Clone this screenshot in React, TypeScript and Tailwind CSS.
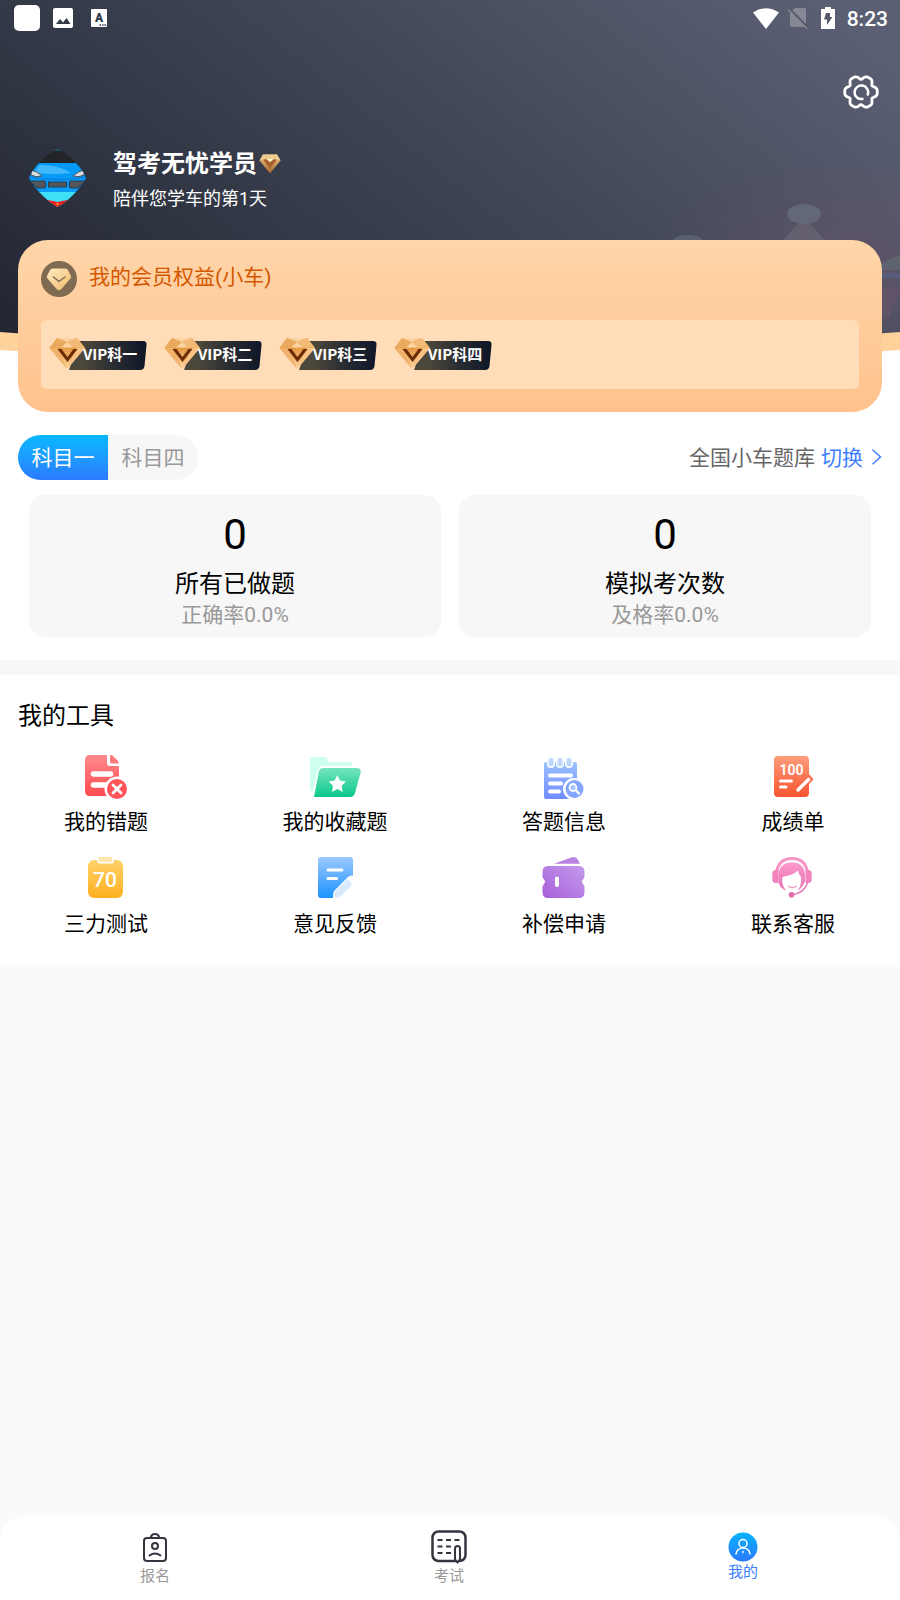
import { useState } from "react";
import type { ReactNode } from "react";

// six-lobed outline of the settings gear, the second term flattens the lobes
const gearPath =
  Array.from({ length: 96 }, (_, i) => {
    const a = (i / 96) * Math.PI * 2;
    const r = 15 + 1.8 * Math.cos(6 * a) - 0.5 * Math.cos(12 * a);
    return `${i === 0 ? "M" : "L"}${(18 + r * Math.cos(a)).toFixed(2)} ${(18 + r * Math.sin(a)).toFixed(2)}`;
  }).join("") + "Z";

const HeaderBackdrop = () => (
  <svg className="absolute top-0 left-0 w-full h-[352px]" viewBox="0 0 900 352" preserveAspectRatio="none" aria-hidden="true">
    <defs>
      <linearGradient id="sky" gradientUnits="userSpaceOnUse" x1="150" y1="430" x2="620" y2="-160">
        <stop offset="0" stopColor="#232732" />
        <stop offset="0.5" stopColor="#3d4353" />
        <stop offset="1" stopColor="#5b5f74" />
      </linearGradient>
      <radialGradient id="dusk" cx="0.5" cy="0.5" r="0.5">
        <stop offset="0" stopColor="#7a5568" stopOpacity="0.35" />
        <stop offset="1" stopColor="#7a5568" stopOpacity="0" />
      </radialGradient>
      <linearGradient id="tower" x1="0" y1="0" x2="1" y2="0">
        <stop offset="0" stopColor="#5f6877" />
        <stop offset="0.5" stopColor="#6b6170" />
        <stop offset="1" stopColor="#5f6877" />
      </linearGradient>
      <clipPath id="hill">
        <path d="M0 0H900V332Q450 368 0 332Z" />
      </clipPath>
    </defs>
    <path d="M0 300H900V350Q450 380 0 350Z" fill="#ffd29b" />
    <g clipPath="url(#hill)">
      <rect width="900" height="352" fill="url(#sky)" />
      <ellipse cx="850" cy="265" rx="210" ry="110" fill="url(#dusk)" />
      <path d="M804 217L780 244H828Z" fill="url(#tower)" opacity="0.8" />
      <ellipse cx="804" cy="214" rx="17" ry="10" fill="#626878" />
      <ellipse cx="688" cy="241" rx="15" ry="6" fill="#596070" />
      <path d="M880 264L900 255V270H880Z" fill="#5f636f" />
      <rect x="880" y="273" width="20" height="5" fill="#56618a" opacity="0.6" />
      <path d="M882 288H900L890 317Q884 321 880 319Z" fill="#66566a" opacity="0.7" />
    </g>
  </svg>
);

const StatusBar = () => (
  <div className="relative h-9 pl-[14px] pr-3 flex items-center justify-between text-white">
    <div className="flex items-center">
      <div className="size-[26px] rounded-[5px] bg-white"></div>
      <svg className="ml-[13px] size-5" viewBox="0 0 20 20">
        <rect width="20" height="20" rx="2" fill="#fff" />
        <path d="M3 16L7 11L10 14.500L13.500 10L17.500 16Z" fill="#333947" />
      </svg>
      <svg className="ml-[18px] w-4 h-[18px]" viewBox="0 0 16 18">
        <rect width="16" height="18" rx="1" fill="#fff" />
        <text x="8" y="13" textAnchor="middle" fontFamily="Roboto" fontWeight="900" fontSize="12" fill="#333947">A</text>
        <path d="M8.500 16H15" stroke="#333947" strokeWidth="1.500" strokeDasharray="1.500 1" />
      </svg>
    </div>
    <div className="flex items-center">
      <svg className="w-[26px] h-[21px]" viewBox="0 0 26 21">
        <path d="M0 4.500Q13 -4 26 4.500L13 21Z" fill="#fff" />
      </svg>
      <svg className="ml-[9px] w-5 h-[22px]" viewBox="0 0 20 22">
        <path d="M7 1H16Q18 1 18 3V20H4Q2 20 2 18V6Z" fill="#868995" />
        <path d="M1 1.500L20 20.500" stroke="#525666" strokeWidth="2" />
        <path d="M0 2.500L19 21.500" stroke="#868995" strokeWidth="1.500" />
      </svg>
      <svg className="ml-[13px] w-[14px] h-[22px]" viewBox="0 0 14 22">
        <path d="M4 0H10V2H14V22H0V2H4Z" fill="#fff" />
        <path d="M5 6H9V10H11.500L6 18V12.500H3Z" fill="#55596b" />
      </svg>
      <span className="ml-3 pt-0.5 text-[21px] leading-9 font-medium">8:23</span>
    </div>
  </div>
);

const Avatar = () => (
  <svg className="size-[58px] shrink-0" viewBox="0 0 58 58">
    <defs>
      <clipPath id="avatarClip">
        <path d="M28.500 0Q38 4 46 13Q54 21 57 29Q53 37 44 46Q36 54 28.500 58Q21 54 13 46Q4 37 0 29Q3 21 11 13Q19 4 28.500 0Z" />
      </clipPath>
      <linearGradient id="paint" x1="0" y1="0" x2="0" y2="1">
        <stop offset="0" stopColor="#0099f5" />
        <stop offset="1" stopColor="#0a9df8" />
      </linearGradient>
    </defs>
    <g clipPath="url(#avatarClip)">
      <rect width="58" height="58" fill="#232427" />
      <rect x="25" y="0" width="7" height="2" fill="#0b6470" />
      <rect y="14" width="58" height="30" fill="url(#paint)" />
      <path d="M10 16Q28 15 42 24Q24 26 5 24Z" fill="#5cc3ff" opacity="0.7" />
      <path d="M0 28Q28 33 58 28" stroke="#0678d4" strokeWidth="1" fill="none" />
      <path d="M2 21Q8 22 13 27Q7 29 2 26Z" fill="#d9dde0" stroke="#44505c" />
      <path d="M55 21Q49 22 44 27Q50 29 55 26Z" fill="#d9dde0" stroke="#44505c" />
      <path d="M1 32H16Q18 36 16 39H8Z" fill="#545658" stroke="#21405f" />
      <path d="M56 32H41Q39 36 41 39H49Z" fill="#545658" stroke="#21405f" />
      <rect x="19.500" y="33" width="18" height="5" fill="#545658" stroke="#21405f" />
      <rect y="43" width="58" height="15" fill="#40e0f8" />
      <path d="M14 50L28.500 53L43 50V58H14Z" fill="#f21b1b" />
      <path d="M27 54H30L28.500 57Z" fill="#e9a13c" />
    </g>
  </svg>
);

const NameGem = () => (
  <svg className="w-[22px] h-5" viewBox="0 0 22 20">
    <defs>
      <linearGradient id="nameGem" x1="0" y1="0" x2="0" y2="1">
        <stop offset="0" stopColor="#f0cf92" />
        <stop offset="0.500" stopColor="#cd9857" />
        <stop offset="1" stopColor="#a0632f" />
      </linearGradient>
    </defs>
    <path d="M4 0.500H18L21.500 6.500L11 19.500L0.500 6.500Z" fill="url(#nameGem)" />
    <path d="M0.500 6.500L4 0.500H18L21.500 6.500L17 5H5Z" fill="#ebcb90" />
    <path d="M4.500 6L7 5L11 8.500L15 5L17.500 6L11 14.500Z" fill="#a65f2c" />
    <path d="M7.500 5H14.500L11 8Z" fill="#fff4d6" />
  </svg>
);

const MemberGem = () => (
  <svg className="size-9" viewBox="0 0 36 36">
    <defs>
      <linearGradient id="memberGem" x1="0" y1="0" x2="1" y2="1">
        <stop offset="0" stopColor="#ffedc6" />
        <stop offset="1" stopColor="#f0b968" />
      </linearGradient>
    </defs>
    <circle cx="18" cy="18" r="18" fill="#7f6a52" />
    <path d="M11.500 7.500H24.500Q26 7.500 27 9L30 15Q30.500 16.500 29.500 17.500L20 28.500Q18 30 16 28.500L6.500 17.500Q5.500 16.500 6 15L9 9Q10 7.500 11.500 7.500Z" fill="url(#memberGem)" />
    <path d="M12.500 16L18 20.500L24 16" fill="none" stroke="#7f6a52" strokeWidth="1.500" strokeLinecap="round" strokeLinejoin="round" />
  </svg>
);

const VipPlate = ({ id }: { id: string }) => (
  <svg className="absolute inset-0 size-full" viewBox="0 0 98 33" aria-hidden="true">
    <defs>
      <linearGradient id={`${id}-plate`}>
        <stop offset="0.200" stopColor="#4c473b" />
        <stop offset="0.550" stopColor="#2b2e32" />
        <stop offset="1" stopColor="#0e1628" />
      </linearGradient>
      <linearGradient id={`${id}-gem`} x1="0" y1="0" x2="0" y2="1">
        <stop offset="0" stopColor="#f1b165" />
        <stop offset="0.350" stopColor="#e59a45" />
        <stop offset="1" stopColor="#ffd9a4" />
      </linearGradient>
    </defs>
    <path d="M30 4H94Q98 4 97.500 8L95.500 29Q95 33 91 33H20Z" fill={`url(#${id}-plate)`} />
    <path d="M8 1H28L36 11L18 32L0.500 11Z" fill={`url(#${id}-gem)`} />
    <path d="M8 1L18 5L12 10.500L0.500 11Z" fill="#eaa95c" />
    <path d="M8 1H28L18 5Z" fill="#f8d3a0" />
    <path d="M28 1L36 11L24 10.500L18 5Z" fill="#f1ba77" />
    <path d="M18 5L24 10.500H12Z" fill="#fbd5a1" />
    <path d="M0.500 11H9L18 32Z" fill="#f0b26b" />
    <path d="M36 11H28L18 32Z" fill="#f9c384" />
    <path d="M8.500 12H12.500L18.500 20L24.500 12H28.500L18.500 25Z" fill="#6d2c05" />
  </svg>
);

const ToolIcon = ({ children }: { children: ReactNode }) => (
  <svg className="w-[54px] h-12" viewBox="0 0 54 48" aria-hidden="true">
    {children}
  </svg>
);

const Gradient = ({ id, from, to, tilt }: { id: string; from: string; to: string; tilt?: boolean }) => (
  <defs>
    <linearGradient id={id} x1={tilt ? 1 : 0} y1="0" x2="0" y2="1">
      <stop offset="0" stopColor={from} />
      <stop offset="1" stopColor={to} />
    </linearGradient>
  </defs>
);

const WrongIcon = () => (
  <ToolIcon>
    <Gradient id="wrong" from="#ff8b8c" to="#ff4b4f" />
    <path d="M11 2H28V10Q28 13 31 13H40V43H11Q6 43 6 38V7Q6 2 11 2Z" fill="url(#wrong)" />
    <path d="M31 2Q33 2 34 3L39 8Q40 9 39.500 10.500H33Q31 10.500 31 8.500Z" fill="#ff7a7c" />
    <path d="M14.500 21H31.500M14.500 32H28" stroke="#fff" strokeWidth="5.500" strokeLinecap="round" />
    <circle cx="38" cy="36" r="12.500" fill="#fff" />
    <circle cx="38" cy="36" r="10" fill="#ff5558" />
    <path d="M34 32L42 40M42 32L34 40" stroke="#fff" strokeWidth="2.800" strokeLinecap="round" />
  </ToolIcon>
);

const FavoriteIcon = () => (
  <ToolIcon>
    <Gradient id="fav" from="#75e4c0" to="#09c88b" />
    <path d="M6 4H16Q19 4 20 7Q20.500 9 23 9H41Q45 9 45 13H15Q11 13 10 17L4.500 39Q2 38 2 35V8Q2 4 6 4Z" fill="#cffff1" />
    <path d="M15 15H48Q54 15 52.500 20L47 40Q46 44 42 44H6L11 18Q12 15 15 15Z" fill="url(#fav)" />
    <path d="M29.300 22L32 27.500L38 28.500L33.700 32.800L34.700 39L29.300 36L24 39L25 32.800L20.700 28.500L26.700 27.500Z" fill="#fff" />
  </ToolIcon>
);

const AnswerIcon = () => (
  <ToolIcon>
    <Gradient id="answer" from="#9bc2ff" to="#6f8cff" />
    <path d="M9 9H38Q40 9 40 11V46H9Q7 46 7 44V11Q7 9 9 9Z" fill="url(#answer)" />
    {[14, 23, 32].map((x) => (
      <g key={x}>
        <rect x={x - 4} y="3" width="8" height="12" rx="4" fill="#fff" />
        <rect x={x - 2.5} y="5" width="5" height="8.500" rx="2.500" fill="#bcd6ff" />
      </g>
    ))}
    <path d="M13 22.500H34M13 30.500H24M13 38.500H22" stroke="#fff" strokeWidth="4" strokeLinecap="round" />
    <circle cx="37" cy="36" r="11" fill="#fff" />
    <circle cx="37.500" cy="36" r="9" fill="#84a6ff" />
    <circle cx="36" cy="34.500" r="3.500" fill="#a9c4ff" stroke="#fff" strokeWidth="1.800" />
    <path d="M39 37.500L42 40.500" stroke="#fff" strokeWidth="2.400" strokeLinecap="round" />
  </ToolIcon>
);

const ScoreIcon = () => (
  <ToolIcon>
    <Gradient id="score" from="#ff9d7b" to="#f7542f" />
    <path d="M12 3H39Q43 3 43 7V21L47 25.500Q47.500 26 47 27L43 31V40Q43 44 39 44H12Q8 44 8 40V7Q8 3 12 3Z" fill="url(#score)" />
    <text x="25.500" y="22" textAnchor="middle" fontFamily="Roboto" fontWeight="600" fontSize="14" fill="#fff">100</text>
    <path d="M14.500 28H25.500M14.500 34H20" stroke="#fff" strokeWidth="3" strokeLinecap="round" />
    <path d="M32 37L42.500 26.500" stroke="#fff" strokeWidth="3.500" strokeLinecap="round" />
  </ToolIcon>
);

const TestIcon = () => (
  <ToolIcon>
    <Gradient id="test" from="#ffd269" to="#ffb01f" />
    <rect x="9" y="5" width="35" height="38" rx="6" fill="url(#test)" />
    <rect x="18" y="0" width="17" height="8.500" rx="3" fill="#fff" />
    <rect x="19.500" y="2" width="14" height="5" rx="1.500" fill="#ffe6ae" />
    <text x="26" y="32" textAnchor="middle" fontFamily="Roboto" fontWeight="500" fontSize="21" fill="#fff">70</text>
  </ToolIcon>
);

const FeedbackIcon = () => (
  <ToolIcon>
    <Gradient id="feedback" from="#9cc7ff" to="#1c93ff" />
    <path d="M13 2H42Q45 2 45 5V20.500Q42 20 40 22L27 35Q25 37 25 40V43H13Q10 43 10 40V5Q10 2 13 2Z" fill="url(#feedback)" />
    <path d="M39 25Q40 24 41 25L43.500 28Q44.500 29.500 43 31L33 41Q31.500 42.500 29 42.500H26.500V40Q26.500 37 28 35.500Z" fill="#d9eaff" />
    <path d="M20 15H34M20 23.500H28.500" stroke="#fff" strokeWidth="3" strokeLinecap="round" />
  </ToolIcon>
);

const TicketIcon = () => (
  <ToolIcon>
    <Gradient id="ticket" from="#c69bee" to="#a65fd8" tilt />
    <path d="M17 8.800L35 2.300Q39 1 41 5L43 8.800Z" fill="#b983e4" />
    <path d="M11 11H42Q47.500 11 47.500 17V21Q47.500 23 46 24.500Q44 26.700 46 29Q47.500 30.500 47.500 32V37Q47.500 43 42 43H11Q5.500 43 5.500 37V32Q5.500 30.500 7 29Q9 26.700 7 24.500Q5.500 23 5.500 21V17Q5.500 11 11 11Z" fill="url(#ticket)" />
    <path d="M20 23.500V30" stroke="#fff" strokeWidth="4" strokeLinecap="round" />
  </ToolIcon>
);

const ServiceIcon = () => (
  <ToolIcon>
    <Gradient id="service" from="#fb9bcb" to="#e86db0" />
    <path d="M10.500 17Q13 3.500 26 3.500Q39 3.500 41.500 17" fill="none" stroke="#f893c5" strokeWidth="3" />
    <path d="M26 7.500Q39 7.500 39 21V26Q37 32 32 35.500Q36 29 35 22Q33 20 32 15.500Q27 20 16.500 22Q15 30 20.500 36Q12.500 32 12.500 26V21Q12.500 7.500 26 7.500Z" fill="url(#service)" />
    <path d="M10 15H12.500V28H10Q6.300 28 6.300 24.500V18.500Q6.300 15 10 15ZM42 15H39.500V28H42Q45.700 28 45.700 24.500V18.500Q45.700 15 42 15Z" fill="#f283bd" />
    <path d="M22 31Q26 34 31 31Q26 35 22 31Z" fill="#e86db0" stroke="#e86db0" strokeWidth="0.500" />
    <path d="M42 27Q38 38.500 26 39.700" fill="none" stroke="#ea76b4" strokeWidth="1.500" />
    <circle cx="25.500" cy="39.700" r="2.800" fill="#e569ad" />
  </ToolIcon>
);

const vips = [
  { id: "vip1", label: "VIP科一" },
  { id: "vip2", label: "VIP科二" },
  { id: "vip3", label: "VIP科三" },
  { id: "vip4", label: "VIP科四" },
];

const subjects = ["科目一", "科目四"];

const stats = [
  { value: "0", title: "所有已做题", rate: "正确率0.0%" },
  { value: "0", title: "模拟考次数", rate: "及格率0.0%" },
];

const tools = [
  { label: "我的错题", icon: <WrongIcon /> },
  { label: "我的收藏题", icon: <FavoriteIcon /> },
  { label: "答题信息", icon: <AnswerIcon /> },
  { label: "成绩单", icon: <ScoreIcon /> },
  { label: "三力测试", icon: <TestIcon /> },
  { label: "意见反馈", icon: <FeedbackIcon /> },
  { label: "补偿申请", icon: <TicketIcon /> },
  { label: "联系客服", icon: <ServiceIcon /> },
];

const BottomNav = () => (
  <nav className="mt-auto h-[84px] pl-2 pr-2.5 rounded-t-3xl bg-white grid grid-cols-3 text-[15px] leading-5 text-[#999999]">
    <a href="#signup" className="pt-[14px] flex flex-col items-center">
      <svg className="w-9 h-9" viewBox="0 0 36 36" fill="none" stroke="#35343f" strokeWidth="2" strokeLinecap="round">
        <rect x="7" y="8" width="22" height="23" rx="3" />
        <path d="M14 7Q14.500 4 18 4Q21.500 4 22 7" />
        <circle cx="18" cy="16" r="3" />
        <path d="M12.500 25.500Q18 21.500 23.500 25.500" />
      </svg>
      <span>报名</span>
    </a>
    <a href="#exam" className="pt-[14px] flex flex-col items-center">
      <svg className="w-9 h-9" viewBox="0 0 36 36" fill="none" stroke="#35343f" strokeWidth="2">
        <rect x="1.500" y="1.500" width="33" height="29.500" rx="6" strokeWidth="2.500" />
        <path d="M6.500 10H11.500M15 10H20M23.500 10H28.500M6.500 16.500H11.500M15 16.500H20M6.500 23H11.500M15 23H20" />
        <path d="M24 29.500V18.500Q24 16 26.500 16Q29 16 29 18.500V29.500L26.500 32.500Z" fill="#fff" />
      </svg>
      <span>考试</span>
    </a>
    <a href="#mine" aria-current="page" className="pt-4 flex flex-col items-center text-[#3d7eff]">
      <svg className="size-[30px]" viewBox="0 0 30 30" fill="none" stroke="#fff" strokeWidth="1.500" strokeLinecap="round">
        <Gradient id="mine" from="#09b4ff" to="#2a78fd" />
        <circle cx="15" cy="15" r="14.500" fill="url(#mine)" stroke="none" />
        <circle cx="15" cy="11.500" r="4" />
        <path d="M8 22Q9 16 15 16Q21 16 22 22M15 19.500V20.500" />
      </svg>
      <span>我的</span>
    </a>
  </nav>
);

const App = () => {
  const [subject, setSubject] = useState(0);

  return (
    <div className="min-h-screen flex flex-col bg-[#fafafa] text-black font-['Roboto','Noto_Sans_CJK_SC',sans-serif]">
      <main className="bg-white">
        <header className="relative">
          <HeaderBackdrop />
          <StatusBar />
          <div className="relative pt-[38px] pr-[21px] flex justify-end">
            <button type="button" aria-label="设置">
              <svg className="size-9" viewBox="0 0 36 36" fill="none" stroke="#fff" strokeLinecap="round" strokeLinejoin="round">
                <path d={gearPath} strokeWidth="2.800" />
                <path d="M24.800 20.500A6.800 6.800 0 1 0 19.500 25" strokeWidth="2.500" />
              </svg>
            </button>
          </div>
          <div className="relative mt-[39px] pl-[29px] flex gap-[26px] text-white">
            <Avatar />
            <div>
              <h1 className="flex items-center gap-0.5 text-2xl leading-[30px] font-bold">
                驾考无忧学员
                <NameGem />
              </h1>
              <p className="mt-1 text-lg leading-8">陪伴您学车的第1天</p>
            </div>
          </div>

          <section className="relative mt-[25px] mx-[18px] px-[23px] pt-[21px] pb-[23px] rounded-[30px] bg-linear-to-b from-[#ffd6a9] to-[#ffc28e]">
            <div className="flex items-start gap-3">
              <MemberGem />
              <h2 className="text-[21px] leading-8 text-[#d45800]">我的会员权益(小车)</h2>
            </div>
            <div className="mt-[23px] h-[69px] pl-2 pb-0.5 flex items-center gap-[17px] rounded-md bg-[#ffddb8]">
              {vips.map((vip) => (
                <button key={vip.id} type="button" className="relative w-[98px] h-[33px] pl-[34px] text-left">
                  <VipPlate id={vip.id} />
                  <span className="relative text-[15px] leading-8 font-bold text-white whitespace-nowrap font-['Noto_Sans_CJK_SC',sans-serif]">{vip.label}</span>
                </button>
              ))}
            </div>
          </section>
        </header>

        <div className="mt-[23px] px-[18px] flex items-center justify-between text-[21px]">
          <div className="flex rounded-full overflow-hidden bg-[#f7f7f7]">
            {subjects.map((name, i) => (
              <button
                key={name}
                type="button"
                onClick={() => setSubject(i)}
                className={`w-[90px] h-[45px] pt-[3px] ${subject === i ? "bg-linear-to-b from-[#06b8ff] to-[#2b7bff] text-white" : "text-[#999999]"}`}
              >
                {name}
              </button>
            ))}
          </div>
          <a href="#switch" className="pt-[3px] flex items-center text-[#3d7eff]">
            <span className="mr-1.5 text-[#666666]">全国小车题库</span>
            切换
            <svg className="ml-2 mb-1 w-[11px] h-4" viewBox="0 0 11 16" fill="none" stroke="#3d7eff" strokeWidth="1.500">
              <path d="M1.500 0.800L9.500 8L1.500 15.200" />
            </svg>
          </a>
        </div>

        <div className="mt-[15px] px-[29px] pb-[23px] grid grid-cols-2 gap-[18px] text-center">
          {stats.map((stat) => (
            <div key={stat.title} className="pt-4 pb-1.5 rounded-2xl bg-[#f7f7f7]">
              <p className="text-[42px] leading-[48px]">{stat.value}</p>
              <p className="mt-[9px] text-2xl leading-8">{stat.title}</p>
              <p className="text-[21px] leading-[31px] text-[#999999]">{stat.rate}</p>
            </div>
          ))}
        </div>

        <div className="h-[15px] bg-[#f7f7f7]"></div>

        <section className="pt-[23px] pb-7">
          <h2 className="px-[18px] text-2xl leading-9">我的工具</h2>
          <div className="mt-[19px] pl-12 pr-[49px] grid grid-cols-[repeat(4,116px)] justify-between gap-y-[18px]">
            {tools.map((tool) => (
              <button key={tool.label} type="button" className="flex flex-col items-center gap-1.5">
                {tool.icon}
                <span className="text-[21px] leading-[30px] whitespace-nowrap">{tool.label}</span>
              </button>
            ))}
          </div>
        </section>
      </main>

      <BottomNav />
    </div>
  );
};

export default App;
